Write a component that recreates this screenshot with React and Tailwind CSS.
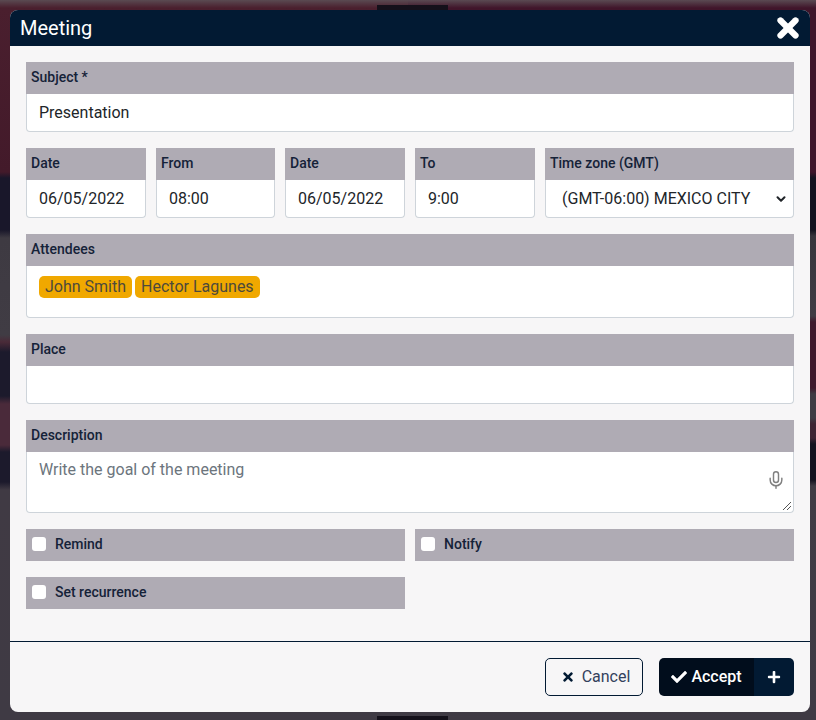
import React from 'react';
import { X, Mic, ChevronDown } from 'lucide-react';
import { FaCheck, FaPlus, FaTimes } from 'react-icons/fa';

const Field = ({ label, className = '', children }) => (
  <div className={`flex flex-col ${className}`}>
    <div className="h-8 bg-[#afabb4] pl-[5px] pt-[7px] text-[14px] leading-[17px] font-medium text-[#152238]">
      {label}
    </div>
    {children}
  </div>
);

const inputBox =
  'bg-white border border-[#ced4da] border-t-0 rounded-b-[4px] pl-3 text-[16px]';

const Tag = ({ children }) => (
  <span className="h-[22px] px-[6px] rounded-[5px] bg-[#f0a800] text-[16px] leading-[22px] text-[#4d4a3c]">
    {children}
  </span>
);

const CheckRow = ({ label }) => (
  <div className="h-8 bg-[#afabb4] flex items-center pl-[6px] gap-[9px] pb-[1px] text-[14px] font-medium text-[#152238]">
    <span className="w-[14px] h-[14px] -mt-[2px] rounded-[3px] bg-white" />
    {label}
  </div>
);

// blurred page behind the modal, only the edges show
const Backdrop = () => (
  <div className="absolute inset-0 flex">
    <div className="w-1/2 bg-[linear-gradient(to_bottom,#5a4a52_0px,#4a1f2e_8px,#431a2a_172px,#19172a_178px,#19172a_230px,#3e3a42_238px,#403c44_335px,#4a2a38_342px,#1c1a2c_352px,#1c1a2c_396px,#4a2a3a_404px,#4a2a3a_445px,#1c1a2c_452px,#1c1a2c_482px,#403a44_490px,#3f3a44_720px)]" />
    <div className="w-1/2 bg-[linear-gradient(to_bottom,#5a4a52_0px,#40152a_8px,#40152a_172px,#14131f_178px,#14131f_230px,#38353c_236px,#403c44_316px,#40182c_322px,#40182c_388px,#403c44_394px,#403c44_418px,#3f2534_424px,#3f2534_438px,#14131f_444px,#14131f_480px,#403c44_486px,#3f3a44_720px)]" />
    <div className="absolute left-[377px] top-[5px] w-[71px] h-[5px] bg-[#14101a]" />
    <div className="absolute left-[377px] top-[716px] w-[71px] h-1 bg-[#14101a]" />
  </div>
);

export default function App() {
  return (
    <div
      className="relative w-[816px] h-[720px] pt-[10px] overflow-hidden"
      style={{ fontFamily: 'Roboto, sans-serif' }}
    >
      <Backdrop />
      <div className="relative mx-[10px] w-[800px] h-[702px] bg-[#f7f6f7] rounded-[8px] overflow-hidden flex flex-col">
        <div className="h-9 shrink-0 bg-[#021a33] flex items-center justify-between pl-[10px] pr-[7px]">
          <span className="text-[20px] text-white">Meeting</span>
          <X size={30} strokeWidth={5} className="text-white" />
        </div>

        <div className="flex-1 px-4 pt-4 flex flex-col text-[#212529]">
          <Field label="Subject *">
            <div className={`${inputBox} h-[38px] flex items-center`}>Presentation</div>
          </Field>

          <div className="mt-4 flex gap-[10px]">
            <Field label="Date" className="w-[120px]">
              <div className={`${inputBox} h-[38px] flex items-center`}>06/05/2022</div>
            </Field>
            <Field label="From" className="w-[119px]">
              <div className={`${inputBox} h-[38px] flex items-center`}>08:00</div>
            </Field>
            <Field label="Date" className="w-[120px]">
              <div className={`${inputBox} h-[38px] flex items-center`}>06/05/2022</div>
            </Field>
            <Field label="To" className="w-[120px]">
              <div className={`${inputBox} h-[38px] flex items-center`}>9:00</div>
            </Field>
            <Field label="Time zone (GMT)" className="w-[249px]">
              <div className={`${inputBox} h-[38px] flex items-center justify-between !pl-4 pr-[5px]`}>
                <span>(GMT-06:00) MEXICO CITY</span>
                <ChevronDown size={14} strokeWidth={3.5} />
              </div>
            </Field>
          </div>

          <Field label="Attendees" className="mt-4">
            <div className={`${inputBox} h-[52px] flex items-start gap-[3px] pt-[10px]`}>
              <Tag>John Smith</Tag>
              <Tag>Hector Lagunes</Tag>
            </div>
          </Field>

          <Field label="Place" className="mt-4">
            <div className={`${inputBox} h-[38px]`} />
          </Field>

          <Field label="Description" className="mt-4">
            <div className={`${inputBox} relative h-[61px] pt-[6px] text-[#6c757d]`}>
              Write the goal of the meeting
              <Mic size={20} strokeWidth={1.75} className="absolute right-[7px] top-[18px] text-[#808080]" />
              <svg className="absolute right-[1px] bottom-[1px] w-[10px] h-[10px]" viewBox="0 0 10 10">
                <path d="M1 9 L9 1 M5 9 L9 5" stroke="#555" strokeWidth="1" />
              </svg>
            </div>
          </Field>

          <div className="mt-4 grid grid-cols-2 gap-x-[10px] gap-y-4">
            <CheckRow label="Remind" />
            <CheckRow label="Notify" />
            <CheckRow label="Set recurrence" />
          </div>
        </div>

        <div className="h-[71px] shrink-0 border-t border-[#021a33] flex items-start justify-end gap-4 pt-4 pr-4">
          <button className="w-[98px] h-[38px] pl-[3px] rounded-[5px] border border-[#021a33] flex items-center justify-center gap-[7px] text-[16px] text-[#33415c]">
            <FaTimes size={14} className="text-[#021a33]" />
            Cancel
          </button>
          <div className="h-[38px] flex rounded-[5px] overflow-hidden text-white">
            <button className="w-[95px] bg-[#010d1c] flex items-center justify-center gap-[4px] text-[16px] font-medium">
              <FaCheck size={16} />
              Accept
            </button>
            <button className="w-10 bg-[#021a33] flex items-center justify-center">
              <FaPlus size={14} />
            </button>
          </div>
        </div>
      </div>
    </div>
  );
}
